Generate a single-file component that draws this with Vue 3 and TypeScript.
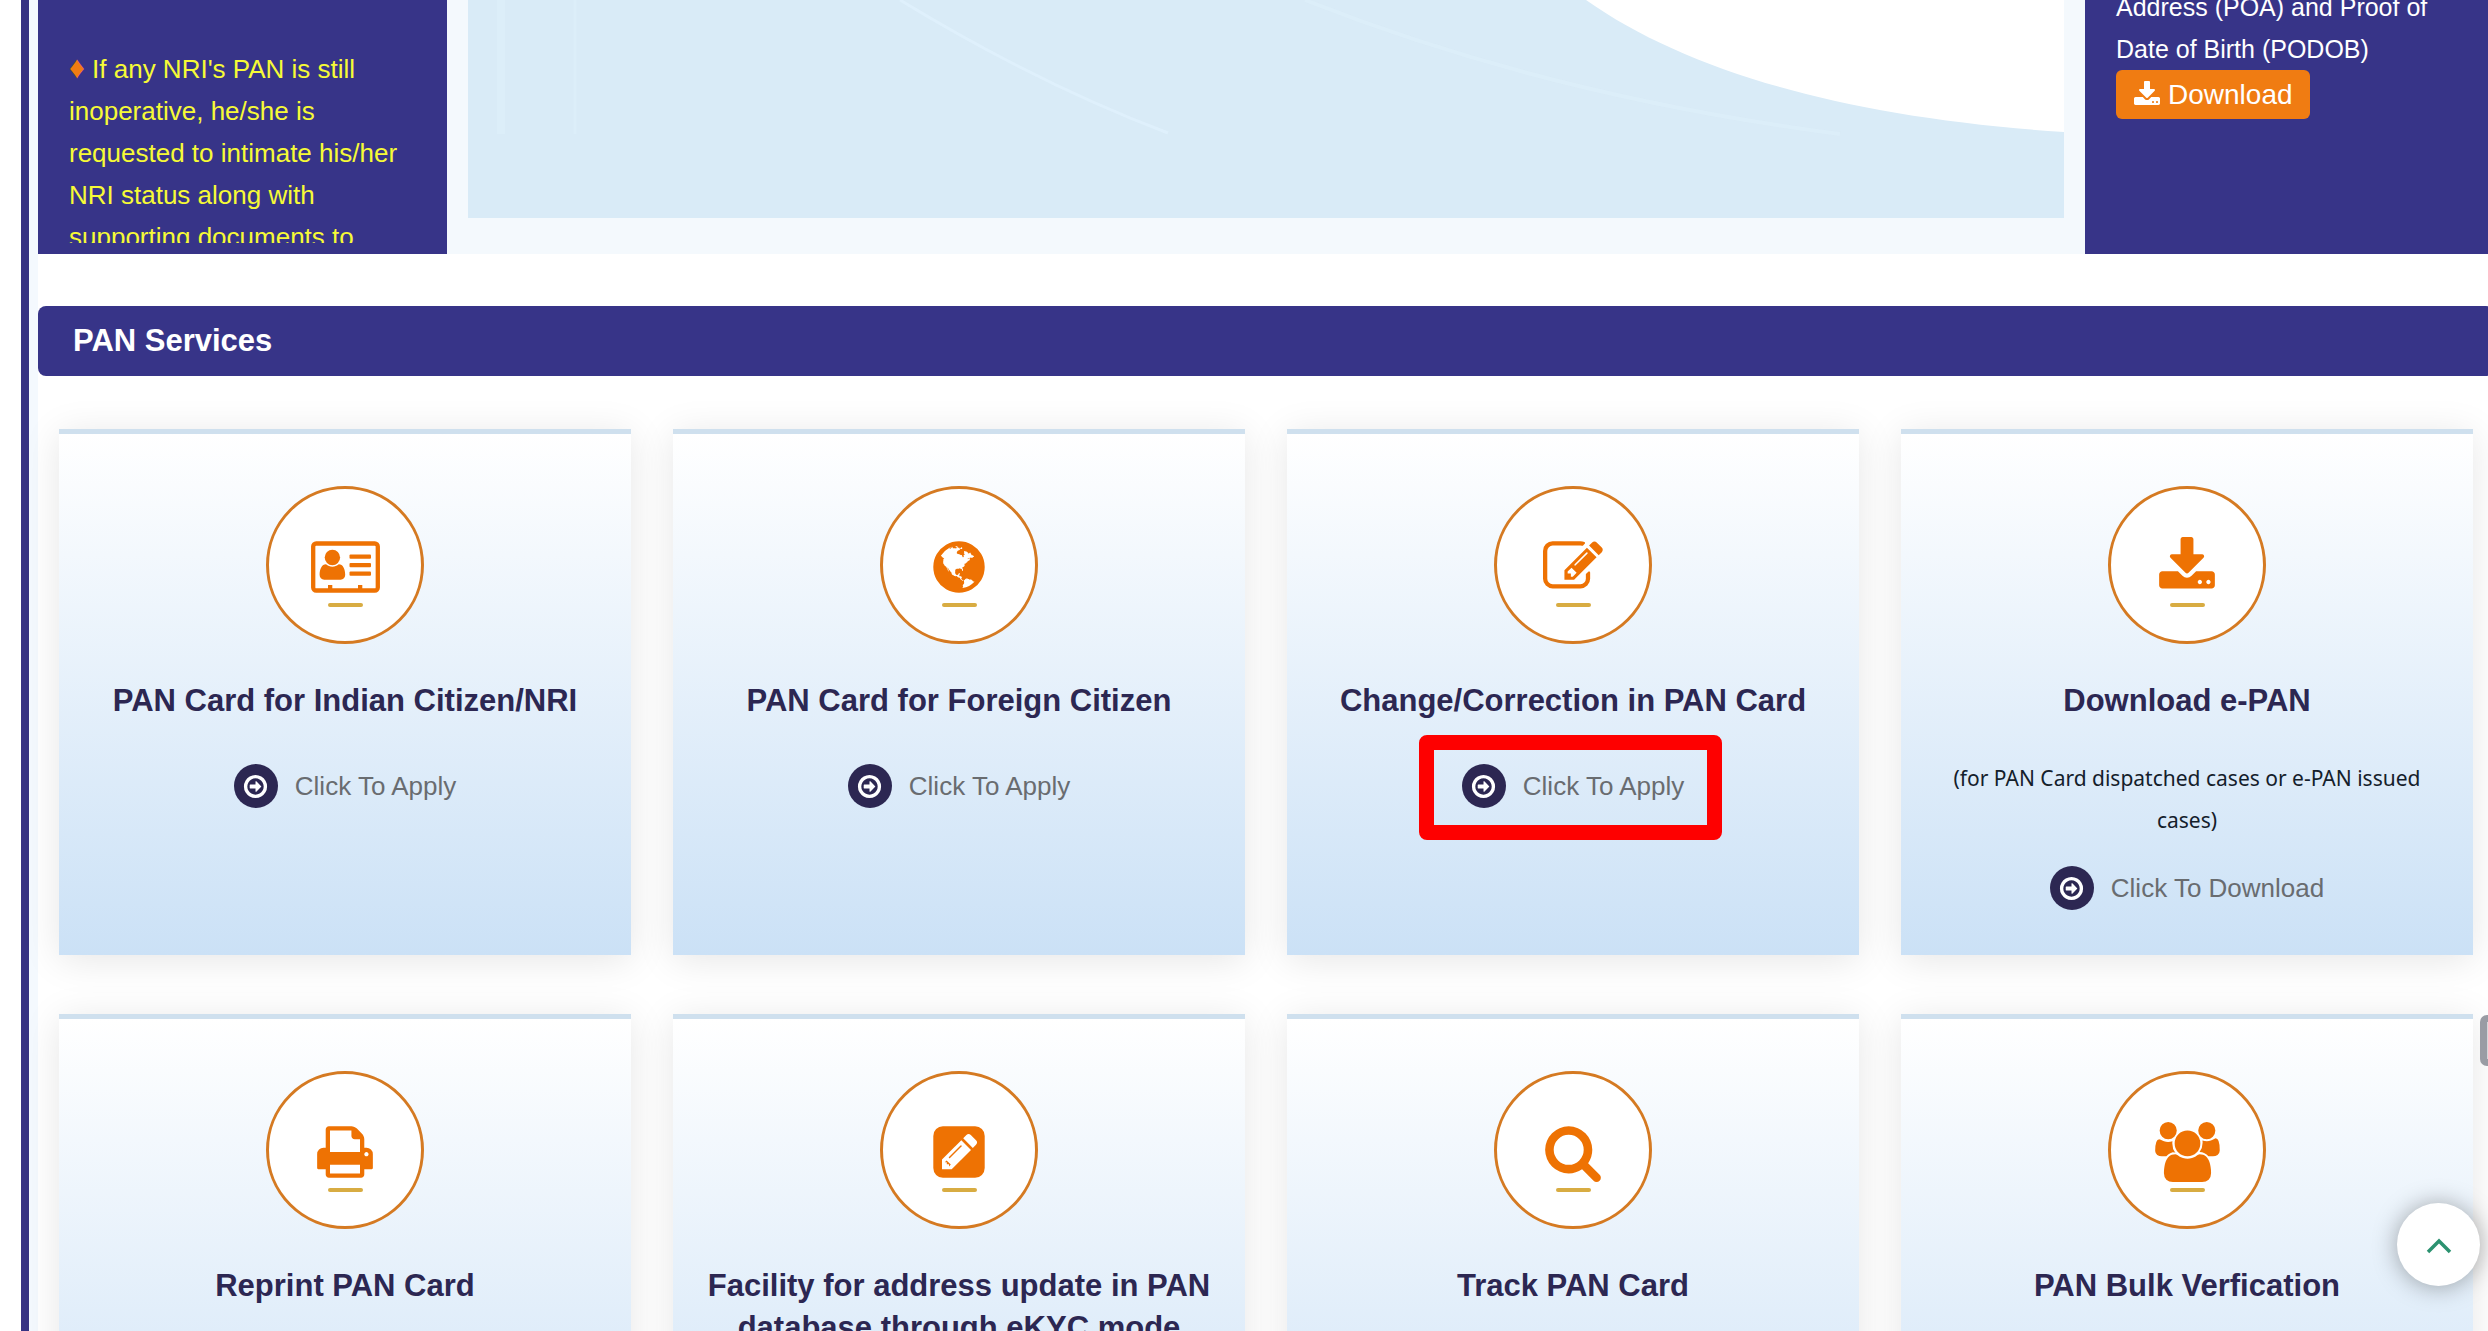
<script setup lang="ts">
interface Glyph {
  viewBox: string
  width: number
  path: string
}

interface Service {
  title: string
  icon: string
  note?: string
  action?: string
  highlighted?: boolean
}

const glyphs: Record<string, Glyph> = {
  globe: {
    viewBox: '0 0 1792 1792',
    width: 60,
    path: 'M896 128q209 0 385.5 103t279.5 279.5 103 385.5-103 385.5-279.5 279.5-385.5 103-385.5-103-279.5-279.5-103-385.5 103-385.5 279.5-279.5 385.5-103zm274 521q-2 1-9.5 9.5t-13.5 9.5q2 0 4.5-5t5-11 3.5-7q6-7 22-15 14-6 52-12 34-8 51 11-2-2 9.5-13t14.5-12q3-2 15-4.5t15-7.5l2-22q-12 1-17.5-7t-6.5-21q0 2-6 8 0-7-4.5-8t-11.5 1-9 1q-10-3-15-7.5t-8-16.5-4-15q-2-5-9.5-11t-9.5-10q-1-2-2.5-5.5t-3-6.5-4-5.5-5.5-2.5-7 5-7.5 10-4.5 5q-3-2-6-1.5t-4.5 1-4.5 3-5 3.5q-3 2-8.5 3t-8.5 2q15-5-1-11-10-4-16-3 9-4 7.5-12t-8.5-14h5q-1-4-8.5-8.5t-17.5-8.5-13-6q-8-5-34-9.5t-33-.5q-5 6-4.5 10.5t4 14 3.5 12.5q1 6-5.5 13t-6.5 12q0 7 14 15.5t10 21.5q-3 8-16 16t-16 12q-5 8-1.5 18.5t10.5 16.5q2 2 1.5 4t-3.5 4.5-5.5 4-6.5 3.5l-3 2q-11 5-20.5-6t-13.5-26q-7-25-16-30-23-8-29 1-5-13-41-26-25-9-58-4 6-1 0-15-7-15-19-12 3-6 4-17.5t1-13.5q3-13 12-23 1-1 7-8.5t9.5-13.5.5-6q35 4 50-11 5-5 11.5-17t10.5-17q9-6 14-5.5t14.5 5.5 14.5 5q14 1 15.5-11t-7.5-20q12 1 3-17-4-7-8-9-12-4-27 5-8 4 2 8-1-1-9.5 10.5t-16.5 17.5-16-5q-1-1-5.5-13.5t-9.5-13.5q-8 0-16 15 3-8-11-15t-24-8q19-12-8-27-7-4-20.5-5t-19.5 4q-5 7-5.5 11.5t5 8 10.5 5.5 11.5 4 8.5 3q14 10 8 14-2 1-8.5 3.5t-11.5 4.5-6 4q-3 4 0 14t-2 14q-5-5-9-17.5t-7-16.5q7 9-25 6l-10-1q-4 0-16 2t-20.5 1-13.5-8q-4-8 0-20 1-4 4-2-4-3-11-9.5t-10-8.5q-46 15-94 41 6 1 12-1 5-2 13-6.5t10-5.5q34-14 42-7l5-5q14 16 20 25-7-4-30-1-20 6-22 12 7 12 5 18-4-3-11.5-10t-14.5-11-15-5q-16 0-22 1-146 80-235 222 7 7 12 8 4 1 5 9t2.5 11 11.5-3q9 8 3 19 1-1 44 27 19 17 21 21 3 11-10 18-1-2-9-9t-9-4q-3 5 .5 18.5t10.5 12.5q-7 0-9.5 16t-2.5 35.5-1 23.5l2 1q-3 12 5.5 34.5t21.5 19.5q-13 3 20 43 6 8 8 9 3 2 12 7.5t15 10 10 10.5q4 5 10 22.5t14 23.5q-2 6 9.5 20t10.5 23q-1 0-2.5 1t-2.5 1q3 7 15.5 14t15.5 13q1 3 2 10t3 11 8 2q2-20-24-62-15-25-17-29-3-5-5.5-15.5t-4.5-14.5q2 0 6 1.5t8.5 3.5 7.5 4 2 3q-3 7 2 17.5t12 18.5 17 19 12 13q6 6 14 19.5t0 13.5q9 0 20 10.5t17 19.5q5 8 8 26t5 24q2 7 8.5 13.5t12.5 9.5l16 8 13 7q5 2 18.5 10.5t21.5 11.5q10 4 16 4t14.5-2.5 13.5-3.5q15-2 29 15t21 21q36 19 55 11-2 1 .5 7.5t8 15.5 9 14.5 5.5 8.5q5 6 18 15t18 15q6-4 7-9-3 8 7 20t18 10q14-3 14-32-31 15-49-18 0-1-2.5-5.5t-4-8.5-2.5-8.5 0-7.5 5-3q9 0 10-3.5t-2-12.5-4-13q-1-8-11-20t-12-15q-5 9-16 8t-16-9q0 1-1.5 5.5t-1.5 6.5q-13 0-15-1 1-3 2.5-17.5t3.5-22.5q1-4 5.5-12t7.5-14.5 4-12.5-4.5-9.5-17.5-2.5q-19 1-26 20-1 3-3 10.5t-5 11.5-9 7q-7 3-24 2t-24-5q-13-8-22.5-29t-9.5-37q0-10 2.5-26.5t3-25-5.5-24.5q3-2 9-9.5t10-10.5q2-1 4.5-1.5t4.5 0 4-1.5 3-6q-1-1-4-3-3-3-4-3 7 3 28.5-1.5t27.5 1.5q15 11 22-2 0-1-2.5-9.5t-.5-13.5q5 27 29 9 3 3 15.5 5t17.5 5q3 2 7 5.5t5.5 4.5 5-.5 8.5-6.5q10 14 12 24 11 40 19 44 7 3 11 2t4.5-9.5 0-14-1.5-12.5l-1-8v-18l-1-8q-15-3-18.5-12t1.5-18.5 15-18.5q1-1 8-3.5t15.5-6.5 12.5-8q21-19 15-35 7 0 11-9-1 0-5-3t-7.5-5-4.5-2q9-5 2-16 5-3 7.5-11t7.5-10q9 12 21 2 8-8 1-16 5-7 20.5-10.5t18.5-9.5q7 2 8-2t1-12 3-12q4-5 15-9t13-5l17-11q3-4 0-4 18 2 31-11 10-11-6-20 3-6-3-9.5t-15-5.5q3-1 11.5-.5t10.5-1.5q15-10-7-16-17-5-43 12zm-163 877q206-36 351-189-3-3-12.5-4.5t-12.5-3.5q-18-7-24-8 1-7-2.5-13t-8-9-12.5-8-11-7q-2-2-7-6t-7-5.5-7.5-4.5-8.5-2-10 1l-3 1q-3 1-5.5 2.5t-5.5 3-4 3 0 2.5q-21-17-36-22-5-1-11-5.5t-10.5-7-10-1.5-11.5 7q-5 5-6 15t-2 13q-7-5 0-17.5t2-18.5q-3-6-10.5-4.5t-12 4.5-11.5 8.5-9 6.5-8.5 5.5-8.5 7.5q-3 4-6 12t-5 11q-2-4-11.5-6.5t-9.5-5.5q2 10 4 35t5 38q7 31-12 48-27 25-29 40-4 22 12 26 0 7-8 20.5t-7 21.5q0 6 2 16z',
  },
  edit: {
    viewBox: '0 0 1792 1792',
    width: 60,
    path: 'M888 1184l116-116-152-152-116 116v56h96v96h56zm440-720q-16-16-33 1l-350 350q-17 17-1 33t33-1l350-350q17-17 1-33zm80 594v190q0 119-84.5 203.5t-203.5 84.5h-832q-119 0-203.5-84.5t-84.5-203.5v-832q0-119 84.5-203.5t203.5-84.5h832q63 0 117 25 15 7 18 23 3 17-9 29l-49 49q-14 14-32 8-23-6-45-6h-832q-66 0-113 47t-47 113v832q0 66 47 113t113 47h832q66 0 113-47t47-113v-126q0-13 9-22l64-64q15-15 35-7t20 29zm-96-738l288 288-672 672h-288v-288zm444 132l-92 92-288-288 92-92q28-28 68-28t68 28l152 152q28 28 28 68t-28 68z',
  },
  download: {
    viewBox: '0 0 1792 1792',
    width: 60,
    path: 'M1344 1344q0-26-19-45t-45-19-45 19-19 45 19 45 45 19 45-19 19-45zm256 0q0-26-19-45t-45-19-45 19-19 45 19 45 45 19 45-19 19-45zm128-224v320q0 40-28 68t-68 28h-1472q-40 0-68-28t-28-68v-320q0-40 28-68t68-28h465l135 136q58 56 136 56t136-56l136-136h464q40 0 68 28t28 68zm-325-569q17 41-14 70l-448 448q-18 19-45 19t-45-19l-448-448q-31-29-14-70 17-39 59-39h256v-448q0-26 19-45t45-19h256q26 0 45 19t19 45v448h256q42 0 59 39z',
  },
  print: {
    viewBox: '0 0 1792 1792',
    width: 60,
    path: 'M448 1536h896v-256h-896v256zm0-640h896v-384h-160q-40 0-68-28t-28-68v-160h-640v640zm1152 64q0-26-19-45t-45-19-45 19-19 45 19 45 45 19 45-19 19-45zm128 0v416q0 13-9.500 22.500t-22.500 9.500h-224v160q0 40-28 68t-68 28h-960q-40 0-68-28t-28-68v-160h-224q-13 0-22.500-9.500t-9.500-22.500v-416q0-79 56.500-135.500t135.500-56.500h64v-544q0-40 28-68t68-28h672q40 0 88 20t76 48l152 152q28 28 48 76t20 88v256h64q79 0 135.500 56.500t56.500 135.500z',
  },
  search: {
    viewBox: '0 0 1792 1792',
    width: 60,
    path: 'M1216 832q0-185-131.5-316.5t-316.5-131.5-316.5 131.5-131.5 316.5 131.5 316.5 316.5 131.5 316.5-131.5 131.5-316.5zm512 832q0 52-38 90t-90 38q-54 0-90-38l-343-342q-179 124-399 124-143 0-273.5-55.5t-225-150-150-225-55.5-273.5 55.5-273.5 150-225 225-150 273.5-55.5 273.5 55.5 225 150 150 225 55.5 273.5q0 220-124 399l343 343q37 37 37 90z',
  },
  users: {
    viewBox: '0 0 2048 1792',
    width: 69,
    path: 'M657 896q-162 5-265 128h-134q-82 0-138-40.5t-62-118.5q0-353 124-353 6 0 43.5 21t97.5 42.5 119 21.5q67 0 133-23-5 37-5 66 0 159 90 280zm1071 637q0 120-73 189.5t-194 69.5h-874q-121 0-194-69.5t-73-189.5q0-53 3.5-103.5t14-109 26.5-108.5 43-97.5 62-81 85.5-53.5 111.5-20q10 0 43 21.5t73 48 107 48 135 21.5 135-21.5 107-48 73-48 43-21.5q61 0 111.5 20t85.5 53.5 62 81 43 97.5 26.5 108.5 14 109 3.5 103.5zm-1024-1277q0 106-75 181t-181 75-181-75-75-181 75-181 181-75 181 75 75 181zm704 384q0 159-112.5 271.5t-271.5 112.5-271.5-112.5-112.5-271.5 112.5-271.5 271.5-112.5 271.5 112.5 112.5 271.5zm576 225q0 78-62 118.5t-138 40.5h-134q-103-123-265-128 90-121 90-280 0-29-5-66 66 23 133 23 59 0 119-21.5t97.5-42.5 43.5-21q124 0 124 353zm-128-609q0 106-75 181t-181 75-181-75-75-181 75-181 181-75 181 75 75 181z',
  },
}

const arrowPath =
  'M1280 896q0 14-9 23l-320 320q-9 9-23 9-13 0-22.5-9.5t-9.5-22.5v-192h-352q-13 0-22.5-9.5t-9.5-22.5v-192q0-13 9.5-22.5t22.5-9.5h352v-192q0-14 9-23t23-9q12 0 24 10l319 319q9 9 9 23zm160 0q0-148-73-273t-198-198-273-73-273 73-198 198-73 273 73 273 198 198 273 73 273-73 198-198 73-273zm224 0q0 209-103 385.5t-279.5 279.5-385.5 103-385.5-103-279.5-279.5-103-385.5 103-385.5 279.5-279.5 385.5-103 385.5 103 279.5 279.5 103 385.5z'

const services: Service[] = [
  { title: 'PAN Card for Indian Citizen/NRI', icon: 'idCard', action: 'Click To Apply' },
  { title: 'PAN Card for Foreign Citizen', icon: 'globe', action: 'Click To Apply' },
  { title: 'Change/Correction in PAN Card', icon: 'edit', action: 'Click To Apply', highlighted: true },
  {
    title: 'Download e-PAN',
    icon: 'download',
    note: '(for PAN Card dispatched cases or e-PAN issued cases)',
    action: 'Click To Download',
  },
  { title: 'Reprint PAN Card', icon: 'print' },
  { title: 'Facility for address update in PAN database through eKYC mode', icon: 'pencilSquare' },
  { title: 'Track PAN Card', icon: 'search' },
  { title: 'PAN Bulk Verfication', icon: 'users' },
]
</script>

<template>
  <div class="page">
    <main class="content">
      <div class="top">
        <aside class="notice">
          <p class="notice-text">
            <span class="bullet">♦</span> If any NRI's PAN is still inoperative, he/she is requested to
            intimate his/her NRI status along with supporting documents to
          </p>
        </aside>
        <div class="banner">
          <svg class="banner-art" viewBox="0 0 1596 218" preserveAspectRatio="none" aria-hidden="true">
            <rect width="1596" height="218" fill="#d9ebf7" />
            <g fill="none" stroke="#e0f1fc">
              <path d="M33 0V134" stroke-width="8" opacity=".5" />
              <path d="M107 0V134" stroke-width="3" opacity=".5" />
              <path d="M432 0Q570 84 700 133" stroke-width="3" opacity=".8" />
              <path d="M837 0Q1080 96 1372 134" stroke-width="4" opacity=".5" />
            </g>
            <path d="M1118 0C1220 72 1380 118 1596 132V0Z" fill="#fff" />
          </svg>
        </div>
        <aside class="documents">
          <p class="documents-text">Address (POA) and Proof of<br />Date of Birth (PODOB)</p>
          <button type="button" class="download">
            <svg width="28" height="28" viewBox="0 0 1792 1792" aria-hidden="true">
              <path :d="glyphs.download.path" fill="currentColor" />
            </svg>
            <span>Download</span>
          </button>
        </aside>
      </div>

      <h2 class="section-title">PAN Services</h2>

      <section class="cards">
        <article v-for="service in services" :key="service.title" class="card">
          <div class="badge">
            <svg v-if="service.icon === 'idCard'" width="69" height="60" viewBox="0 0 69 60" aria-hidden="true">
              <rect x="2.200" y="6.500" width="64.600" height="47" rx="3" fill="none" stroke="currentColor" stroke-width="4.300" />
              <g fill="currentColor">
                <path d="M17 48h4.300v5H17zM47 48h4.300v5H47z" />
                <rect x="38.500" y="17.500" width="21.500" height="4.300" rx="1" />
                <rect x="38.500" y="26" width="21.500" height="4.300" rx="1" />
                <rect x="38.500" y="34.500" width="21.500" height="4.300" rx="1" />
                <circle cx="21.400" cy="20.500" r="7.700" />
                <path d="M15 27.300c3.500 3.200 9.300 3.200 12.800 0 4.200 0 6.400 5 6.400 10.500 0 3-1.900 4.900-4.600 4.900H13.200c-2.700 0-4.600-1.900-4.600-4.900 0-5.500 2.200-10.500 6.400-10.500z" />
              </g>
            </svg>
            <svg v-else-if="service.icon === 'pencilSquare'" width="60" height="60" viewBox="0 0 60 60" aria-hidden="true">
              <rect x="4.300" y="4.300" width="51.400" height="51.400" rx="9.600" fill="currentColor" />
              <g fill="#fff">
                <path d="M13 47.200V37.500L32.300 18.200l9.700 9.700L22.700 47.200z" />
                <path d="M34.200 16.300l3.200-3.200q2.200-2.200 4.400 0l5.200 5.200q2.200 2.200 0 4.400l-3.200 3.200z" />
              </g>
              <path d="M20.500 35.500L32 24" fill="none" stroke="currentColor" stroke-width="1.400" stroke-linecap="round" />
              <path d="M15.800 40.200l1.800-1.800 4.200 4.200-1.800 1.800v-2.200h-2.200v-2z" fill="currentColor" />
            </svg>
            <svg v-else :width="glyphs[service.icon].width" height="60" :viewBox="glyphs[service.icon].viewBox" aria-hidden="true">
              <path :d="glyphs[service.icon].path" fill="currentColor" />
            </svg>
          </div>
          <h3 class="card-title">{{ service.title }}</h3>
          <p v-if="service.note" class="card-note">{{ service.note }}</p>
          <a v-if="service.action" href="#" class="action" :class="{ highlighted: service.highlighted }">
            <span class="action-icon">
              <svg width="27" height="27" viewBox="0 0 1792 1792" aria-hidden="true">
                <path :d="arrowPath" fill="currentColor" />
              </svg>
            </span>
            <span>{{ service.action }}</span>
          </a>
        </article>
      </section>
    </main>

    <div class="side-handle"></div>
    <button type="button" class="to-top" aria-label="Back to top">
      <svg width="26" height="18" viewBox="0 0 26 18" aria-hidden="true">
        <path d="M2 16L13 5l11 11" fill="none" stroke="#2c9270" stroke-width="3.500" />
      </svg>
    </button>
  </div>
</template>

<style>
body {
  margin: 0;
  overflow: hidden;
}
</style>

<style scoped>
.page {
  box-sizing: border-box;
  height: 100vh;
  padding-left: 21px;
  overflow: hidden;
  background: #fff;
  color: #fff;
  font-family: "Liberation Sans", Arial, sans-serif;
}

.content {
  margin-right: -6px;
  border-left: 8px solid #373283;
  background: linear-gradient(90deg, #f4f9fe 9px, #fff 9px);
  padding-left: 9px;
}

.top {
  display: flex;
  height: 254px;
  background: #f4f9fd;
}

.notice {
  box-sizing: border-box;
  flex: 0 0 409px;
  padding: 0 31px 11px;
  background: #373488;
}

.notice-text {
  box-sizing: border-box;
  height: 100%;
  margin: 0;
  padding-top: 48px;
  overflow: hidden;
  color: #f6fa36;
  font-size: 26px;
  line-height: 42px;
}

.bullet {
  color: #f07c12;
  font-size: 31px;
  line-height: 31px;
}

.banner {
  flex: 1;
  min-width: 0;
  padding: 0 21px;
}

.banner-art {
  display: block;
  width: 100%;
  height: 218px;
}

.documents {
  box-sizing: border-box;
  flex: 0 0 409px;
  padding: 0 31px;
  overflow: hidden;
  background: #373488;
}

.documents-text {
  margin: -14px 0 0;
  font-size: 25px;
  line-height: 42px;
}

.download {
  display: flex;
  align-items: center;
  gap: 7px;
  height: 49px;
  padding: 0 17px;
  border: 0;
  border-radius: 6px;
  background: #f07c12;
  color: #fff;
  font: 28px "Liberation Sans", Arial, sans-serif;
}

.section-title {
  margin: 52px 0 0;
  padding: 0 35px;
  border-radius: 8px;
  background: #373488;
  font-size: 31px;
  font-weight: 700;
  line-height: 70px;
}

.cards {
  display: grid;
  grid-template-columns: repeat(4, 1fr);
  gap: 59px 42px;
  padding: 53px 21px;
}

.card {
  box-sizing: border-box;
  display: flex;
  flex-direction: column;
  align-items: center;
  min-height: 526px;
  padding: 52px 26px 45px;
  border-top: 5px solid #cfe0ee;
  background: linear-gradient(#fff, #cbe1f6);
  box-shadow: 0 5px 36px rgba(0, 0, 0, 0.1);
  text-align: center;
}

.badge {
  box-sizing: border-box;
  display: flex;
  flex: none;
  align-items: center;
  justify-content: center;
  position: relative;
  width: 158px;
  height: 158px;
  padding-top: 3px;
  border: 3px solid #d57a22;
  border-radius: 50%;
  background: #fff;
  color: #ee7203;
}

.badge::after {
  content: "";
  position: absolute;
  bottom: 34px;
  width: 35px;
  height: 4px;
  border-radius: 2px;
  background: #d8ac42;
}

.card-title {
  margin: 36px 0 0;
  color: #2c2752;
  font-size: 31px;
  font-weight: 700;
  line-height: 42px;
}

.card-note {
  margin: 35px 0 0;
  color: #14202b;
  font-family: "Noto Sans", "Open Sans", sans-serif;
  font-size: 21px;
  line-height: 42px;
}

.action {
  display: flex;
  align-items: center;
  gap: 17px;
  position: relative;
  margin-top: 42px;
  color: #696c70;
  font-size: 26px;
  line-height: 44px;
  text-decoration: none;
}

.card-note + .action {
  margin-top: 25px;
}

.action-icon {
  display: flex;
  align-items: center;
  justify-content: center;
  width: 44px;
  height: 44px;
  border-radius: 50%;
  background: #2c2752;
  color: #fff;
}

.highlighted::after {
  content: "";
  position: absolute;
  inset: -29px -38px -32px -43px;
  border: 15px solid #fe0000;
  border-radius: 8px;
}

.side-handle {
  position: fixed;
  top: 1015px;
  right: -8px;
  box-sizing: border-box;
  width: 16px;
  height: 51px;
  border: 7px solid #999ca4;
  border-radius: 7px;
  background: #d5d7da;
}

.to-top {
  display: flex;
  align-items: center;
  justify-content: center;
  position: fixed;
  right: 8px;
  bottom: 45px;
  width: 83px;
  height: 83px;
  padding: 0;
  border: 0;
  border-radius: 50%;
  background: #fff;
  box-shadow: 0 1px 24px rgba(0, 0, 0, 0.34);
}
</style>
